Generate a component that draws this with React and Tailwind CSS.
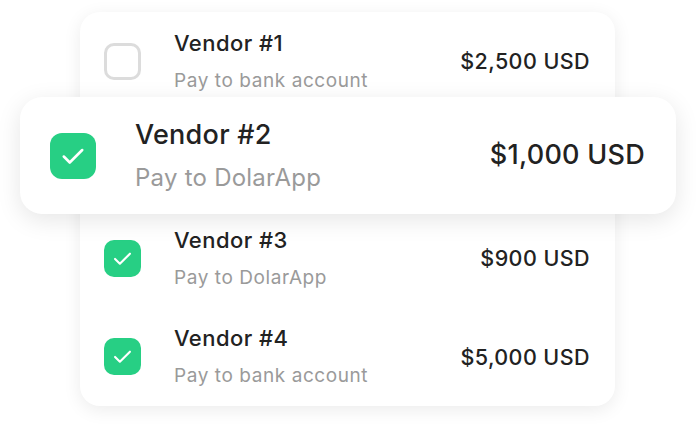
const rows = [
  { name: "Vendor #1", sub: "Pay to bank account", amount: "$2,500 USD", checked: false },
  null,
  { name: "Vendor #3", sub: "Pay to DolarApp", amount: "$900 USD", checked: true },
  { name: "Vendor #4", sub: "Pay to bank account", amount: "$5,000 USD", checked: true },
];

const Check = ({ checked, big }) => {
  const size = big ? "w-[46px] h-[46px] rounded-[12px]" : "w-[37px] h-[37px] rounded-[10px]";
  if (!checked)
    return <div className={`${size} border-[3px] border-[#dcdcdc] bg-white shrink-0`}></div>;
  return (
    <div className={`${size} bg-[#27cf84] flex items-center justify-center shrink-0`}>
      <svg viewBox="0 0 24 24" className={big ? "w-[26px] h-[26px]" : "w-[21px] h-[21px]"} fill="none" stroke="white" strokeWidth="2.4" strokeLinecap="round" strokeLinejoin="round">
        <path d="M3.5 12.5l5.5 5.5 11.5-11.5" />
      </svg>
    </div>
  );
};

export default function App() {
  return (
    <div className="w-[696px] h-[427px] bg-white relative overflow-hidden" style={{ fontFamily: "Inter, 'Noto Sans', sans-serif" }}>
      <div className="absolute left-[80px] top-[12px] w-[535px] bg-white rounded-[20px] shadow-[0_4px_18px_rgba(0,0,0,0.08)] flex flex-col">
        {rows.map((r, i) =>
          r ? (
            <div key={i} className="h-[98.5px] flex items-center pl-6 pr-[25px]">
              <Check checked={r.checked} />
              <div className="ml-[33px] flex flex-col gap-[13px] flex-1">
                <div className="text-[22px] font-medium text-[#222] tracking-[0.02em] leading-[26px]">{r.name}</div>
                <div className="text-[19px] text-[#9a9a9a] tracking-[0.03em] leading-[24px]">{r.sub}</div>
              </div>
              <div className="text-[21.5px] font-medium text-[#222] tracking-[0.02em]">{r.amount}</div>
            </div>
          ) : (
            <div key={i} className="h-[98.5px]"></div>
          )
        )}
      </div>
      <div className="absolute left-[20px] top-[97px] w-[656px] h-[117px] bg-white rounded-[22px] shadow-[0_6px_24px_rgba(0,0,0,0.10)] flex items-center pl-[30px] pr-[31px]">
        <Check checked big />
        <div className="ml-[39px] flex flex-col gap-[14px] flex-1">
          <div className="text-[27px] font-medium text-[#222] tracking-[0.01em] leading-[30px]">Vendor #2</div>
          <div className="text-[24px] text-[#9a9a9a] tracking-[0.01em] leading-[28px]">Pay to DolarApp</div>
        </div>
        <div className="text-[27px] font-medium text-[#222] tracking-[0.01em]">$1,000 USD</div>
      </div>
    </div>
  );
}
